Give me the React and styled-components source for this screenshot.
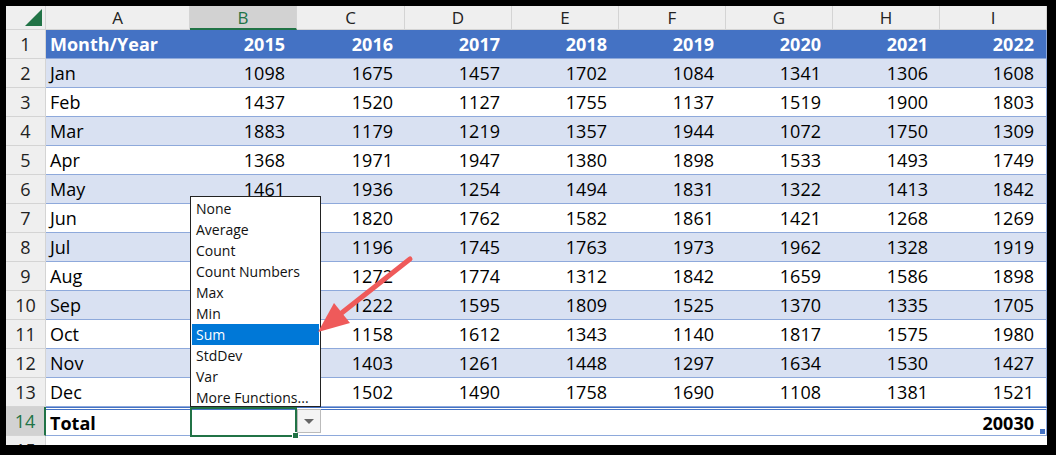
import React from "react";
import styled, { createGlobalStyle } from "styled-components";

const G = createGlobalStyle`
  html,body{margin:0;padding:0;background:#000;}
  body{font-family:"Open Sans","Liberation Sans",sans-serif;}
`;
const Frame = styled.div`
  width:1056px;height:455px;box-sizing:border-box;padding:6px 9px 10px 6px;background:#000;overflow:hidden;
`;
const Sheet = styled.div`
  position:relative;background:#fff;height:100%;overflow:hidden;
`;
const Grid = styled.div`
  display:grid;
  grid-template-columns:40px 144px 107px 108px 107px 107px 107px 107px 107px 107px;
  grid-auto-rows:29px;
  grid-template-rows:24px;
`;
const ColHead = styled.div`
  background:${p=>p.sel?"#d2d2d2":"#efefef"};
  color:${p=>p.sel?"#217346":"#222"};
  border-right:1px solid #d4d4d4;
  border-bottom:${p=>p.sel?"2px solid #217346":"1px solid #d4d4d4"};
  box-sizing:border-box;
  display:flex;align-items:center;justify-content:center;font-size:17px;
  position:relative;
`;
const Corner = styled(ColHead)`
  &::after{content:"";position:absolute;right:3px;bottom:3px;width:0;height:0;
    border-left:17px solid transparent;border-bottom:17px solid #217346;}
`;
const RowHead = styled.div`
  background:${p=>p.sel?"#d2d2d2":"#efefef"};
  color:${p=>p.sel?"#217346":"#222"};
  border-bottom:1px solid #d4d4d4;
  border-right:${p=>p.sel?"2px solid #217346":"1px solid #d4d4d4"};
  box-sizing:border-box;display:flex;align-items:center;justify-content:center;font-size:18px;
`;
const Cell = styled.div`
  box-sizing:border-box;
  background:${p=>p.head?"#4472c4":p.band?"#d9e1f2":"#fff"};
  color:${p=>p.head?"#fff":"#000"};
  font-weight:${p=>p.bold?700:400};
  font-size:18px;
  display:flex;align-items:center;
  justify-content:${p=>p.right?"flex-end":"flex-start"};
  padding:0 ${p=>p.right?"12px":"4px"} 0 4px;
  border-bottom:1px solid #8ea9db;
  border-top:${p=>p.total?"3px double #4472c4":"0"};
  border-right:${p=>p.last?"1px solid #8ea9db":"0"};
  white-space:nowrap;
`;
const Menu = styled.div`
  position:absolute;left:184px;top:190px;width:131px;height:211px;box-sizing:border-box;
  background:#fff;border:1px solid #222;padding:1px 1px;
  display:flex;flex-direction:column;
`;
const Item = styled.div`
  height:21px;line-height:21px;font-size:14px;padding-left:4px;
  background:${p=>p.active?"#0078d7":"transparent"};color:${p=>p.active?"#fff":"#111"};
`;
const SelBox = styled.div`
  position:absolute;left:184px;top:401px;width:107px;height:30px;box-sizing:border-box;
  border:2px solid #217346;
  &::after{content:"";position:absolute;right:-4px;bottom:-4px;width:5px;height:5px;background:#217346;border:1px solid #fff;}
`;
const DropBtn = styled.div`
  position:absolute;left:291px;top:403px;width:24px;height:24px;box-sizing:border-box;
  border:1px solid #bbb;background:#f4f4f4;display:flex;align-items:center;justify-content:center;
  &::after{content:"";border-left:5px solid transparent;border-right:5px solid transparent;border-top:5px solid #666;}
`;
const Resize = styled.div`
  position:absolute;left:1034px;top:423px;width:5px;height:5px;background:#4472c4;
`;
const Arrow = styled.svg`position:absolute;left:300px;top:245px;`;

const data = [
  ["Jan",1098,1675,1457,1702,1084,1341,1306,1608],
  ["Feb",1437,1520,1127,1755,1137,1519,1900,1803],
  ["Mar",1883,1179,1219,1357,1944,1072,1750,1309],
  ["Apr",1368,1971,1947,1380,1898,1533,1493,1749],
  ["May",1461,1936,1254,1494,1831,1322,1413,1842],
  ["Jun","",1820,1762,1582,1861,1421,1268,1269],
  ["Jul","",1196,1745,1763,1973,1962,1328,1919],
  ["Aug","",1272,1774,1312,1842,1659,1586,1898],
  ["Sep","",1222,1595,1809,1525,1370,1335,1705],
  ["Oct","",1158,1612,1343,1140,1817,1575,1980],
  ["Nov","",1403,1261,1448,1297,1634,1530,1427],
  ["Dec","",1502,1490,1758,1690,1108,1381,1521],
];
const cols = ["A","B","C","D","E","F","G","H","I"];
const items = ["None","Average","Count","Count Numbers","Max","Min","Sum","StdDev","Var","More Functions..."];

export default function App(){
  return (<Frame><G/><Sheet>
    <Grid>
      <Corner/>
      {cols.map(c=><ColHead key={c} sel={c==="B"}>{c}</ColHead>)}
      <RowHead>1</RowHead>
      {["Month/Year",2015,2016,2017,2018,2019,2020,2021,2022].map((h,i)=>
        <Cell key={i} head bold right={i>0} last={i===8}>{h}</Cell>)}
      {data.map((r,ri)=>(
        <React.Fragment key={ri}>
          <RowHead>{ri+2}</RowHead>
          {r.map((v,i)=><Cell key={i} band={ri%2===0} right={i>0} last={i===8}>{v}</Cell>)}
        </React.Fragment>
      ))}
      <RowHead sel>14</RowHead>
      {["Total","","","","","","","",20030].map((v,i)=>
        <Cell key={i} bold total right={i>0} last={i===8}>{v}</Cell>)}
      <RowHead>15</RowHead>
    </Grid>
    <Menu>{items.map(t=><Item key={t} active={t==="Sum"}>{t}</Item>)}</Menu>
    <SelBox/><DropBtn/><Resize/>
    <Arrow width="110" height="90" viewBox="0 0 110 90">
      <line x1="104" y1="8" x2="28" y2="68" stroke="#ef5a5a" strokeWidth="5" strokeLinecap="round"/>
      <polygon points="12,81 28,52 44,72" fill="#ef5a5a"/>
    </Arrow>
  </Sheet></Frame>);
}
